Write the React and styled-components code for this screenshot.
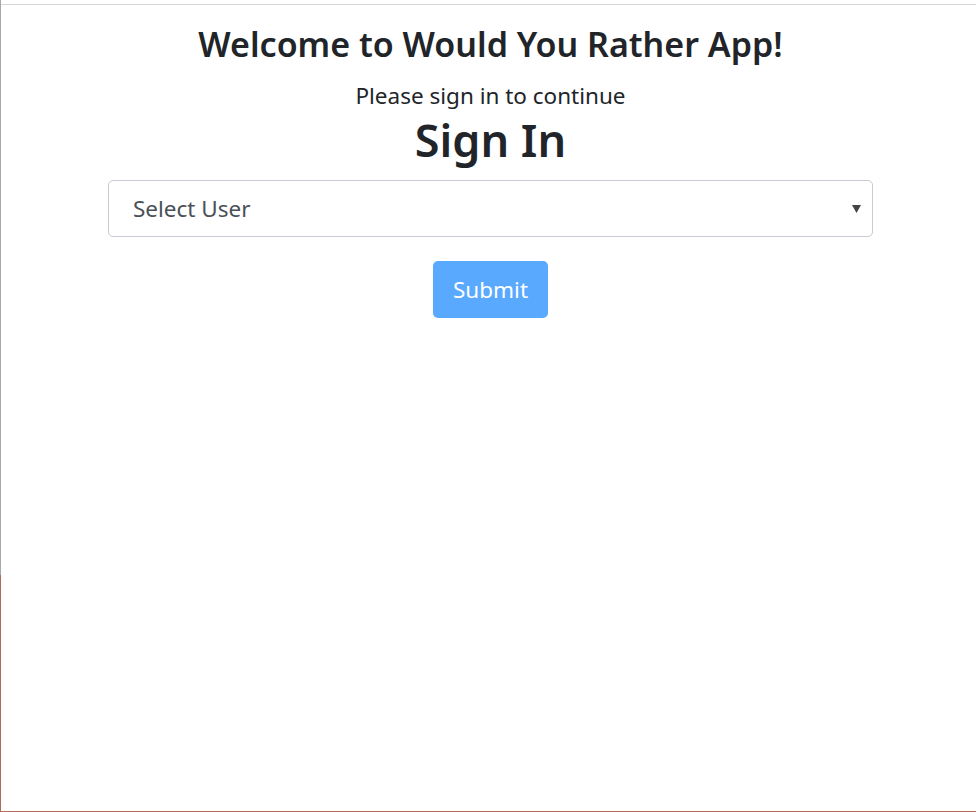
import React from "react";
import styled, { createGlobalStyle } from "styled-components";

const GlobalStyle = createGlobalStyle`
  html, body {
    margin: 0;
    padding: 0;
    background: #ffffff;
  }
  body {
    font-family: "Noto Sans", "Open Sans", sans-serif;
    color: #212529;
  }
`;

const Frame = styled.div`
  box-sizing: border-box;
  height: 812px;
  padding-top: 4px;
  border-left: 1px solid #a8a8a8;
  border-image: linear-gradient(to bottom, #a8a8a8 575px, #b56b5c 575px) 1;
  border-top: none;
  border-right: none;
  border-bottom: 1px solid #c8c8c8;
`;

const Page = styled.div`
  box-sizing: border-box;
  height: 100%;
  border-top: 1px solid #d6d6dc;
`;

const Main = styled.main`
  display: flex;
  flex-direction: column;
  align-items: center;
  padding: 0 103px 0 107px;
`;

const Title = styled.h2`
  margin: 19px 0 0;
  font-size: 34px;
  font-weight: 600;
  line-height: 1.2;
`;

const Subtitle = styled.p`
  margin: 17px 0 0;
  font-size: 22.5px;
  font-weight: 400;
  line-height: 1.2;
`;

const Heading = styled.h1`
  margin: 4px 0 0;
  font-size: 45px;
  font-weight: 600;
  line-height: 1.2;
`;

const Form = styled.form`
  display: flex;
  flex-direction: column;
  align-items: center;
  width: 100%;
  margin-top: 13px;
`;

const SelectWrap = styled.div`
  position: relative;
  width: 100%;
`;

const Select = styled.select`
  box-sizing: border-box;
  width: 100%;
  height: 57px;
  padding: 0 40px 0 24px;
  border: 1px solid #c6ccd2;
  border-radius: 5px;
  background: #ffffff;
  color: #495057;
  font-family: "Noto Sans", "Open Sans", sans-serif;
  font-size: 22.5px;
  appearance: none;
  outline: none;
`;

const Caret = styled.svg`
  position: absolute;
  right: 12px;
  top: 24px;
  width: 9px;
  height: 9px;
  pointer-events: none;
`;

const Button = styled.button`
  margin-top: 24px;
  height: 57px;
  padding: 0 20px;
  border: none;
  border-radius: 5px;
  background: #59a9ff;
  color: #ffffff;
  font-family: "Noto Sans", "Open Sans", sans-serif;
  font-size: 22.5px;
  cursor: default;
`;

export default function App() {
  return (
    <>
      <GlobalStyle />
      <Frame>
        <Page>
          <Main>
            <Title>Welcome to Would You Rather App!</Title>
            <Subtitle>Please sign in to continue</Subtitle>
            <Heading>Sign In</Heading>
            <Form onSubmit={(e) => e.preventDefault()}>
              <SelectWrap>
                <Select defaultValue="">
                  <option value="" disabled>
                    Select User
                  </option>
                </Select>
                <Caret viewBox="0 0 9 9">
                  <path d="M0 1h9L4.5 9z" fill="#444" />
                </Caret>
              </SelectWrap>
              <Button type="submit" disabled>
                Submit
              </Button>
            </Form>
          </Main>
        </Page>
      </Frame>
    </>
  );
}
